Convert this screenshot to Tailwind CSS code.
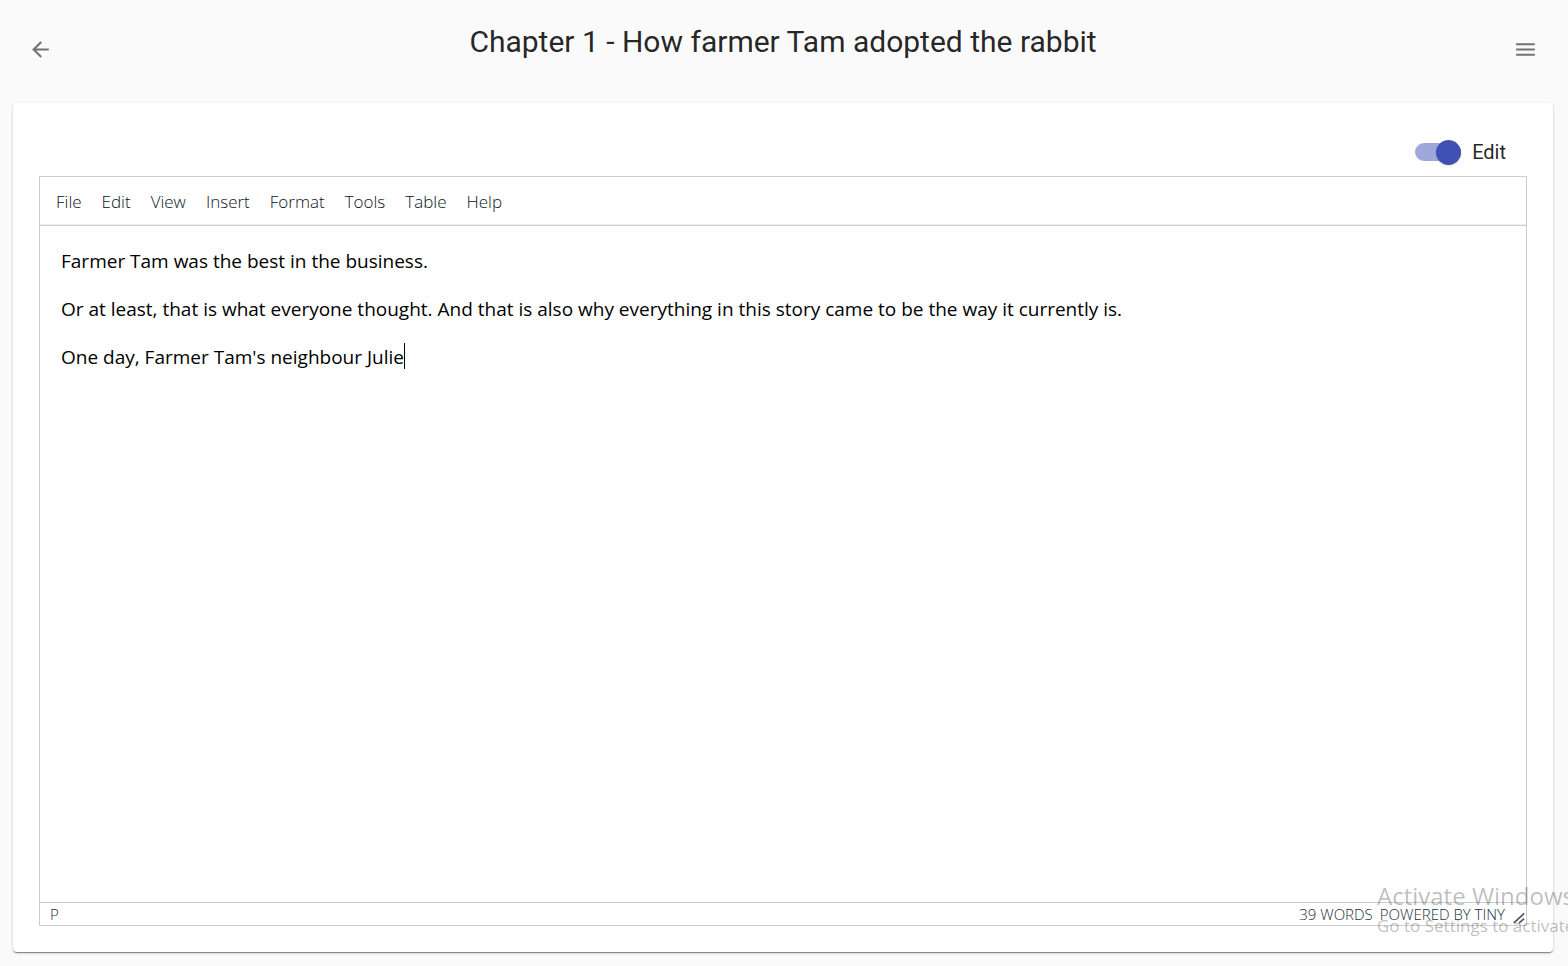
<!DOCTYPE html>
<html lang="en">
<head>
<meta charset="utf-8">
<title>Chapter 1</title>
<script src="https://cdn.jsdelivr.net/npm/@tailwindcss/browser@4"></script>
</head>
<body class="relative flex h-screen flex-col overflow-hidden bg-[#fafafa] font-[Roboto,sans-serif] text-black/87">
<header class="flex h-[103px] shrink-0 items-start justify-between px-7 pt-[18px]">
<button aria-label="Back" class="mt-[19px] text-black/54"><svg class="size-[25px]" viewBox="0 0 24 24" fill="currentColor"><path d="M20 11H7.83l5.59-5.59L12 4l-8 8 8 8 1.41-1.41L7.83 13H20v-2z"/></svg></button>
<h1 class="text-[30px] leading-[48px]">Chapter 1 - How farmer Tam adopted the rabbit</h1>
<button aria-label="Menu" class="mt-[19px] mr-[2px] text-black/54"><svg class="size-[25px]" viewBox="0 0 24 24" fill="currentColor"><path d="M3 18h18v-2H3v2zm0-5h18v-2H3v2zm0-7v2h18V6H3z"/></svg></button>
</header>
<main class="mr-[15px] mb-[14px] ml-[13px] flex flex-1 flex-col rounded bg-white px-[26px] pt-[24px] pb-[26px] shadow-[0_2px_1px_-1px_rgba(0,0,0,0.3),0_1px_1px_0_rgba(0,0,0,0.14),0_1px_3px_0_rgba(0,0,0,0.2)]">
<label class="flex h-[49px] items-center gap-[11px] self-end pt-px pr-[21px] text-xl">
<input type="checkbox" role="switch" checked class="peer sr-only">
<span class="flex h-[18px] w-[46px] items-center rounded-full bg-black/38 peer-checked:justify-end peer-checked:bg-[#9fa8da]"><span class="size-[25px] rounded-full bg-[#3f51b5] shadow"></span></span>
Edit
</label>
<section class="flex flex-1 flex-col border border-[#ccc] font-['Open_Sans','Noto_Sans',sans-serif]">
<nav class="flex h-[49px] shrink-0 items-center gap-5 border-b border-[#ccc] px-4 pt-px text-[17px] font-light text-[#0b1522] shadow-[inset_0_-1px_0_#eee]">
<button>File</button><button>Edit</button><button>View</button><button>Insert</button><button>Format</button><button>Tools</button><button>Table</button><button>Help</button>
</nav>
<div contenteditable="true" role="textbox" aria-label="Chapter text" class="flex-1 space-y-5 px-[21px] pt-[21px] text-[19px] leading-7 text-black outline-none">
<p>Farmer Tam was the best in the business.</p>
<p>Or at least, that is what everyone thought. And that is also why everything in this story came to be the way it currently is.</p>
<p class="flex items-start">One day, Farmer Tam's neighbour Julie<span class="h-[26px] w-px bg-black"></span></p>
</div>
<footer class="flex h-[23px] items-center border-t border-[#ccc] pl-[10px] text-[15px] font-light text-[#222f3e]"><span>P</span><span class="ml-auto">39 WORDS</span><a href="#" class="ml-[7px]">POWERED BY TINY</a>
<svg class="mt-2 mr-px ml-2 h-3 w-3" viewBox="0 0 12 12" fill="none" stroke="#4e5967" stroke-width="1.7"><path d="M.7 11.2 11.2 1.4M6 11.2l5-4.5"/></svg></footer>
</section>
</main>
<aside class="pointer-events-none absolute top-[880px] right-0 left-[1377px] overflow-hidden font-['Open_Sans','Noto_Sans',sans-serif] whitespace-nowrap text-black/27">
<p class="text-2xl">Activate Windows</p>
<p class="text-[17px] leading-7">Go to Settings to activate Windows.</p>
</aside>
</body>
</html>
